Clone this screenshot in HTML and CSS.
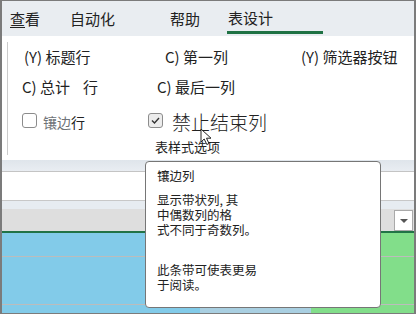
FILE: index.html
```html
<!DOCTYPE html>
<html lang="zh-CN">
<head>
<meta charset="utf-8">
<link rel="stylesheet" href="styles.css">
</head>
<body>
<div class="frame">
  <div class="tabs">
    <div class="tab t1"><u>查</u>看</div>
    <div class="tab t2">自动化</div>
    <div class="tab t3">帮助</div>
    <div class="tab t4 active">表设计</div>
  </div>
  <div class="ribbon">
    <div class="group">
      <div class="row r1">
        <div class="cell c11">(Y) 标题行</div>
        <div class="cell c12">C) 第一列</div>
        <div class="cell">(Y) 筛选器按钮</div>
      </div>
      <div class="row r2">
        <div class="cell c21">C) 总计<span class="gap">行</span></div>
        <div class="cell">C) 最后一列</div>
      </div>
      <div class="row r3">
        <div class="cell c31"><span class="box"></span><span class="faded">镶边</span>行</div>
        <div class="cell big"><span class="box checked"><svg width="13" height="13" viewBox="0 0 13 13"><polyline points="3,6.5 5.5,9 10,4" fill="none" stroke="#333" stroke-width="1.4"/></svg></span>禁止结束列</div>
      </div>
      <div class="glabel">表样式选项</div>
    </div>
  </div>
  <div class="band1"></div>
  <div class="formula"></div>
  <div class="band2"></div>
  <div class="colhead"><div class="dd"><span class="tri"></span></div></div>
  <div class="cells">
    <div class="crow h1"><div class="blue"></div><div class="green"></div></div>
    <div class="crow h2"><div class="blue"></div><div class="green"></div></div>
    <div class="crow h3"><div class="blue"></div><div class="blue2"></div><div class="green"></div></div>
  </div>

  <svg class="cursor" width="14" height="18" viewBox="0 0 14 18">
    <path d="M1,1 L1,14 L4.2,11 L6.8,16.5 L9,15.5 L6.5,10.2 L11,10.2 Z" fill="#fff" stroke="#222" stroke-width="1" stroke-linejoin="round"/>
  </svg>

  <div class="tip">
    <div class="tip-title">镶边列</div>
    <div class="tip-p p1">
      <div class="ln">显示带状列, 其</div>
      <div class="ln">中偶数列的格</div>
      <div class="ln">式不同于奇数列。</div>
    </div>
    <div class="tip-p p2">
      <div class="ln">此条带可使表更易</div>
      <div class="ln">于阅读。</div>
    </div>
  </div>
</div>
</body>
</html>
```
FILE: styles.css
```css
html, body {
  margin: 0;
  padding: 0;
  background: #fff;
}

.frame {
  position: relative;
  width: 416px;
  height: 314px;
  box-sizing: border-box;
  border: 1px solid #7b7b7b;
  border-left-width: 2px;
  border-right-width: 2px;
  overflow: hidden;
  display: flex;
  flex-direction: column;
  font-family: "Noto Sans CJK SC", "Noto Sans", sans-serif;
  color: #222;
}

.tabs {
  height: 35px;
  flex: none;
  display: flex;
  align-items: stretch;
  padding-left: 8px;
  background: #e9edf1;
  font-size: 15px;
}

.tab {
  display: flex;
  align-items: center;
  line-height: 18px;
}

.tab u {
  text-decoration-thickness: 1px;
  text-underline-offset: 2px;
}

.t1 { width: 60px; }
.t2 { width: 100px; }
.t3 { width: 57px; }
.t4 {
  width: 96px;
  padding-left: 1px;
}

.active {
  box-sizing: border-box;
  height: 33px;
  padding-top: 4px;
  border-bottom: 3px solid #1f7244;
}

.ribbon {
  height: 124px;
  flex: none;
  background: #fff;
}

.group {
  margin-left: 5px;
  margin-top: 6px;
  height: 113px;
  border-left: 1px solid #cbcbcb;
  padding-top: 5px;
  box-sizing: border-box;
}

.row {
  display: flex;
  align-items: center;
  font-size: 15px;
  line-height: 20px;
}

.r1 { height: 30px; padding-left: 16px; align-items: flex-start; }
.r2 { height: 33px; padding-left: 14px; align-items: flex-start; }
.r3 { height: 24px; padding-left: 14px; }

.cell {
  display: flex;
  align-items: center;
  white-space: nowrap;
}

.c11 { width: 141px; }
.c12 { width: 136px; }
.c21 { width: 135px; }
.c31 { width: 126px; font-size: 14px; }

.gap { margin-left: 13px; }

.faded { color: #6f7378; }

.box {
  width: 15px;
  height: 15px;
  box-sizing: border-box;
  border: 1px solid #8c8c8c;
  border-radius: 3px;
  background: #fff;
  margin-right: 6px;
  display: flex;
  align-items: center;
  justify-content: center;
  margin-top: -3px;
}

.checked {
  background: #ececec;
  margin-right: 9px;
}

.big {
  font-size: 19px;
  line-height: 24px;
  font-weight: 300;
}

.glabel {
  margin-top: 5px;
  padding-left: 147px;
  font-size: 13px;
  line-height: 16px;
}

.band1 {
  height: 11px;
  flex: none;
  background: linear-gradient(#dfe5eb, #e9edf2);
  border-bottom: 1px solid #c4c4c4;
}

.formula {
  height: 28px;
  flex: none;
  background: #fff;
  border-bottom: 1px solid #c8c8c8;
}

.band2 {
  height: 8px;
  flex: none;
  background: #e7ecf1;
}

.colhead {
  flex: none;
  background: #dedede;
  border-bottom: 2px solid #217346;
  display: flex;
  justify-content: flex-end;
  align-items: flex-start;
  padding-top: 1px;
  height: 21px;
}

.dd {
  width: 19px;
  height: 21px;
  box-sizing: border-box;
  border: 1px solid #a9a9a9;
  background: #fff;
  margin-right: 1px;
  display: flex;
  align-items: center;
  justify-content: center;
}

.tri {
  width: 0;
  height: 0;
  border-left: 4px solid transparent;
  border-right: 4px solid transparent;
  border-top: 4px solid #555;
}

.cells {
  flex: 1;
  display: flex;
  flex-direction: column;
}

.crow {
  display: flex;
  flex: none;
}

.h1 { height: 23px; border-bottom: 1px solid #bcbcbc; }
.h2 { height: 47px; border-bottom: 1px solid #bcbcbc; }
.h3 { flex: 1; }

.blue {
  width: 309px;
  background: #82cbe9;
}

.h3 .blue { width: 198px; }

.blue2 {
  width: 111px;
  background: #a9cfe1;
}

.green {
  flex: 1;
  background: #82de8a;
}

.cursor {
  position: absolute;
  left: 198px;
  top: 127px;
}

.tip {
  position: absolute;
  left: 143px;
  top: 160px;
  width: 236px;
  height: 147px;
  box-sizing: border-box;
  border: 1px solid #767676;
  border-radius: 4px;
  background: #fff;
  padding: 6px 0 0 11px;
  font-size: 12.5px;
  line-height: 15px;
  color: #222;
}

.ln {
  height: 15px;
  white-space: nowrap;
}

.p1 { margin-top: 9px; }
.p2 { margin-top: 25px; }
```
